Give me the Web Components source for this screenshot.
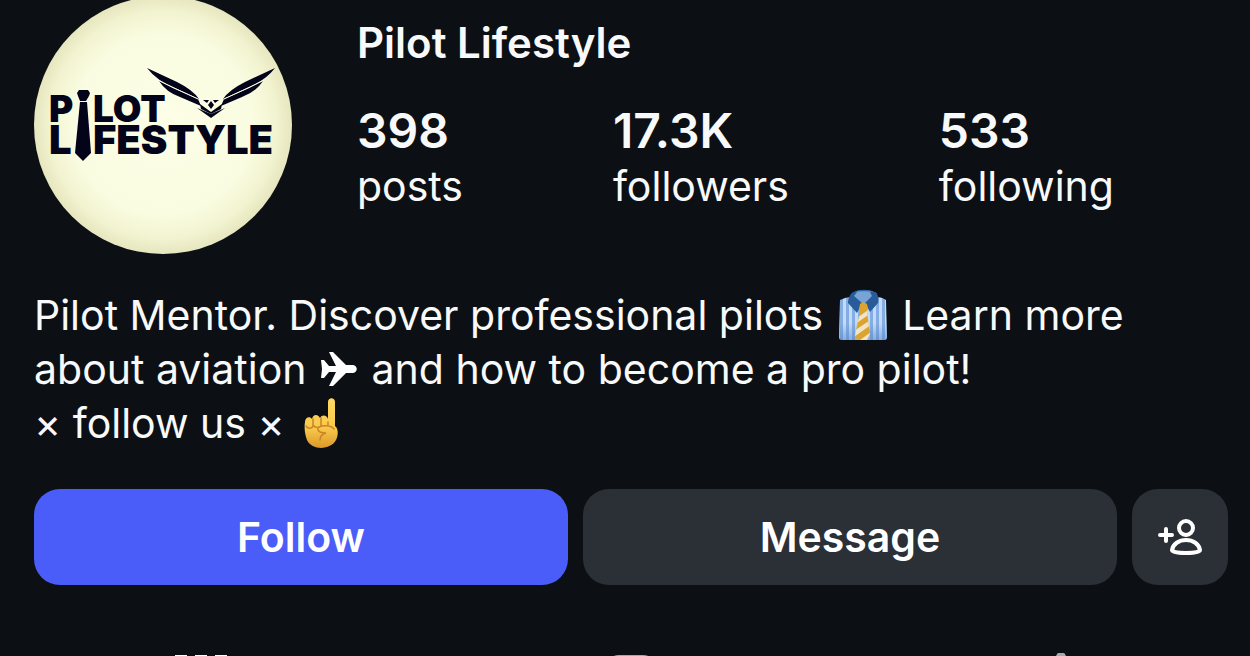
<!DOCTYPE html>
<html lang="en">
<head>
<meta charset="utf-8">
<meta name="viewport" content="width=device-width, initial-scale=1">
<title>Pilot Lifestyle</title>
<style>
  body {
    margin: 0;
    background: #0c1014;
    color: #f8f9fa;
    font-family: Inter, "Liberation Sans", sans-serif;
    font-size: 41px;
  }
</style>
</head>
<body>
<profile-page>
  <profile-avatar slot="avatar"></profile-avatar>
  <span slot="name">Pilot Lifestyle</span>
  <profile-stat slot="stats" value="398">posts</profile-stat>
  <profile-stat slot="stats" value="17.3K">followers</profile-stat>
  <profile-stat slot="stats" value="533">following</profile-stat>
  <profile-bio slot="bio">Pilot Mentor. Discover professional pilots <bio-icon name="shirt"></bio-icon> Learn more about aviation <bio-icon name="plane"></bio-icon> and how to become a pro pilot!<br>× follow us × <bio-icon name="finger"></bio-icon></profile-bio>
  <action-button slot="actions" primary>Follow</action-button>
  <action-button slot="actions">Message</action-button>
  <action-button slot="actions" icon label="Suggested accounts">
    <svg width="48" height="48" viewBox="0 0 48 48" fill="none" stroke="#fff" stroke-width="4" stroke-linecap="round" stroke-linejoin="round">
      <path d="M4 22h12M10 16v12"/>
      <circle cx="30" cy="15" r="7"/>
      <path d="M16 37c1-6 7-10 14-10s13 4 14 10c0 2-5 3-14 3s-14-1-14-3z"/>
    </svg>
  </action-button>
  <profile-tabs slot="tabs"></profile-tabs>
</profile-page>

<script>
// Attach an open shadow root and fill it once.
function render(el, css, html) {
    if (el.shadowRoot) return;
    el.attachShadow({ mode: 'open' }).innerHTML = `<style>${css}</style>${html}`;
}

class ProfilePage extends HTMLElement {
    connectedCallback() {
        render(this, `
            :host { display: block; height: 100vh; overflow: hidden; }
            .content { padding: 0 22px 0 34px; }
            .top { display: flex; gap: 65px; margin-top: -4px; }
            .info { flex: 1; min-width: 0; padding: 20px 114px 0 0; }
            h1 { margin: 0 0 34px; font-size: 42px; line-height: 54px; font-weight: 600; }
            .stats { display: flex; justify-content: space-between; }
            .bio { margin-top: 34px; }
            .actions { display: flex; gap: 15px; margin-top: 39px; }
            .tabs { margin: 68px -26px 0 -14px; }
        `, `
            <main class="content">
                <header class="top">
                    <slot name="avatar"></slot>
                    <div class="info">
                        <h1><slot name="name"></slot></h1>
                        <div class="stats"><slot name="stats"></slot></div>
                    </div>
                </header>
                <div class="bio"><slot name="bio"></slot></div>
                <div class="actions"><slot name="actions"></slot></div>
            </main>
            <nav class="tabs"><slot name="tabs"></slot></nav>
        `);
    }
}

class ProfileAvatar extends HTMLElement {
    connectedCallback() {
        render(this, `
            :host { display: block; flex: none; width: 258px; height: 258px; border-radius: 50%; overflow: hidden; }
            svg { display: block; width: 100%; height: 100%; }
            text { font-family: Inter, sans-serif; font-weight: 900; }
        `, `
            <svg viewBox="34 -4 258 258" fill="#03031a" role="img" aria-label="Pilot Lifestyle logo">
                <defs>
                    <radialGradient id="bg">
                        <stop offset="0" stop-color="#fcffe6"/>
                        <stop offset=".7" stop-color="#f9fce0"/>
                        <stop offset=".88" stop-color="#f2f3d0"/>
                        <stop offset="1" stop-color="#e6e6bf"/>
                    </radialGradient>
                </defs>
                <rect x="34" y="-4" width="258" height="258" fill="url(#bg)"/>
                <g font-size="37">
                    <text x="49" y="122">P</text>
                    <text x="93" y="122">LOT</text>
                </g>
                <g font-size="40">
                    <text x="49" y="154">L</text>
                    <text x="93" y="154">FESTYLE</text>
                </g>
                <path d="M79 90h9l2 3-1 3-3 5h-6l-2-5-1-3z"/>
                <path d="M80 102h7l4 51-8 8-8-8z"/>
                <g id="wing">
                    <path d="M147 68l30 14q16 8 22 17l-24-11q-18-7-28-20z"/>
                    <path d="M159 81l14 7 25 11 3 7-21-9q-14-5-21-16z"/>
                    <path d="M197 108l14 6v4z"/>
                    <path d="M203 100h6l-2 3zM200 104l11 8v2l-10-5z"/>
                </g>
                <use href="#wing" transform="translate(422 0) scale(-1 1)"/>
                <path d="M158 80l16 8 24 11M264 80l-16 8-24 11" fill="none" stroke="#f9fce0"/>
                <path d="M211 101l3 4-3 4-3-4z"/>
            </svg>
        `);
    }
}

class ProfileStat extends HTMLElement {
    connectedCallback() {
        render(this, `
            :host { display: block; line-height: 56px; }
            strong { display: block; font-size: 48px; line-height: 54px; font-weight: 600; }
        `, `<strong>${this.getAttribute('value')}</strong><slot></slot>`);
    }
}

class ProfileBio extends HTMLElement {
    connectedCallback() {
        render(this, `
            :host { display: block; line-height: 54px; }
            p { margin: 0; }
        `, `<p><slot></slot></p>`);
    }
}

const BIO_ICONS = {
    shirt: `
        <svg width="52" height="52" viewBox="0 0 52 52">
            <defs>
                <pattern id="stripes" width="6" height="52" patternUnits="userSpaceOnUse">
                    <rect width="6" height="52" fill="#84aee3"/><rect width="3" height="52" fill="#c3dbf8"/>
                </pattern>
                <linearGradient id="shade" x2="0" y2="1">
                    <stop offset=".6" stop-color="#4f7fc4" stop-opacity="0"/><stop offset="1" stop-color="#4f7fc4" stop-opacity=".5"/>
                </linearGradient>
                <clipPath id="tie"><path d="M23 15l3-2 4 2 1 5-1 3 3 22-3 6H20l-2-5 5-23-1-3z"/></clipPath>
            </defs>
            <path d="M3 11q6-3 11-3h25q6 0 10 3l1 37q0 3-3 3H5q-3 0-3-3z" fill="url(#stripes)"/>
            <path d="M3 11q6-3 11-3h25q6 0 10 3l1 37q0 3-3 3H5q-3 0-3-3z" fill="url(#shade)"/>
            <path d="M15 5c3-5 21-5 25 0l-5 8-9 3-8-4z" fill="#77a3d7"/>
            <path d="M16 3c-3 2-5 7-5 11l9 10 5-10-8-7 3-4zM38 3c3 2 4 6 3 11l-8 9-5-9 7-7-2-4z" fill="#285b97"/>
            <path d="M17 3c5-3 15-3 20 0-6-1-14-1-20 0z" fill="#326aa8"/>
            <g clip-path="url(#tie)">
                <path d="M16 10h20v42H16z" fill="#dca32e"/>
                <path d="M17 31l17-12v5L17 36zM17 42l18-12v5L17 48zM23 51l14-10v5l-8 6z" fill="#eee4ca"/>
            </g>
        </svg>`,
    plane: `
        <svg width="38" height="36" viewBox="0 0 38 36" fill="#fff">
            <path d="M1 9h3l5 6h7L9 1h4l13 13h7c5 1 5 7 0 8h-7L13 35H9l7-14H9l-5 6H1l1-9z"/>
        </svg>`,
    finger: `
        <svg width="36" height="52" viewBox="0 0 36 52">
            <defs>
                <linearGradient id="skin" x2="0" y2="1">
                    <stop stop-color="#ffda62"/><stop offset=".6" stop-color="#f9c84b"/><stop offset="1" stop-color="#dc982a"/>
                </linearGradient>
            </defs>
            <path d="M24 27V5c0-5 7-5 7 0v24c4 3 3 10 1 14-5 10-24 11-29 0-2-5-3-12-2-18 0-5 5-6 7-3 1-5 6-5 8-1 2-4 7-3 8 1z" fill="url(#skin)"/>
            <path d="M9 22v7c-1 3-5 3-7 0M17 21v8c-2 2-6 2-8-1M24 25v3M15 30c4-2 12-2 15 2M14 31c-1 4 4 5 8 5-4 1-6 4-6 7" fill="none" stroke="#c98524" stroke-width="1.5" stroke-linecap="round"/>
        </svg>`
};

class BioIcon extends HTMLElement {
    connectedCallback() {
        // Negative block margins keep tall glyphs from stretching their line.
        render(this, `
            :host { display: inline-block; vertical-align: middle; margin: -10px 2px -2px; line-height: 0; }
            :host([name="finger"]) { margin-left: 8px; }
        `, BIO_ICONS[this.getAttribute('name')]);
    }
}

class ActionButton extends HTMLElement {
    connectedCallback() {
        const label = this.getAttribute('label');
        render(this, `
            :host { display: block; flex: 1; min-width: 0; }
            :host([icon]) { flex: none; width: 96px; }
            button {
                display: flex; align-items: center; justify-content: center;
                width: 100%; height: 96px; padding: 0;
                border: 0; border-radius: 26px;
                background: #2b3036; color: #fff;
                font: 600 41px Inter, sans-serif; cursor: pointer;
            }
            :host([primary]) button { background: #4a5df9; }
        `, `<button type="button"${label ? ` aria-label="${label}"` : ''}><slot></slot></button>`);
    }
}

class ProfileTabs extends HTMLElement {
    connectedCallback() {
        render(this, `
            :host { display: grid; grid-template-columns: repeat(3, 1fr); }
            button { display: flex; justify-content: center; padding: 0; border: 0; background: none; color: #a4a8b0; }
            button[aria-current] { color: #fff; }
        `, `
            <button type="button" aria-label="Posts" aria-current="page">
                <svg width="56" height="60" viewBox="0 0 56 60" fill="currentColor">
                    <path d="M2 2h12v12H2zM22 2h12v12H22zM42 2h12v12H42zM2 22h12v12H2zM22 22h12v12H22zM42 22h12v12H42zM2 42h12v12H2zM22 42h12v12H22zM42 42h12v12H42z"/>
                </svg>
            </button>
            <button type="button" aria-label="Reels">
                <svg width="56" height="60" viewBox="0 0 56 60" fill="none" stroke="currentColor" stroke-width="4">
                    <rect x="4" y="4" width="48" height="50" rx="12"/><path d="M23 20l14 9-14 9z"/>
                </svg>
            </button>
            <button type="button" aria-label="Tagged">
                <svg width="56" height="60" viewBox="0 0 56 60" fill="none" stroke="currentColor" stroke-width="4" stroke-linejoin="round">
                    <path d="M28 3l-7 7H4v44h48V10H35z"/><circle cx="28" cy="26" r="7"/><path d="M14 48c2-12 26-12 28 0"/>
                    <circle cx="28" cy="4" r="3"/>
                </svg>
            </button>
        `);
    }
}

customElements.define('profile-page', ProfilePage);
customElements.define('profile-avatar', ProfileAvatar);
customElements.define('profile-stat', ProfileStat);
customElements.define('profile-bio', ProfileBio);
customElements.define('bio-icon', BioIcon);
customElements.define('action-button', ActionButton);
customElements.define('profile-tabs', ProfileTabs);
</script>
</body>
</html>
